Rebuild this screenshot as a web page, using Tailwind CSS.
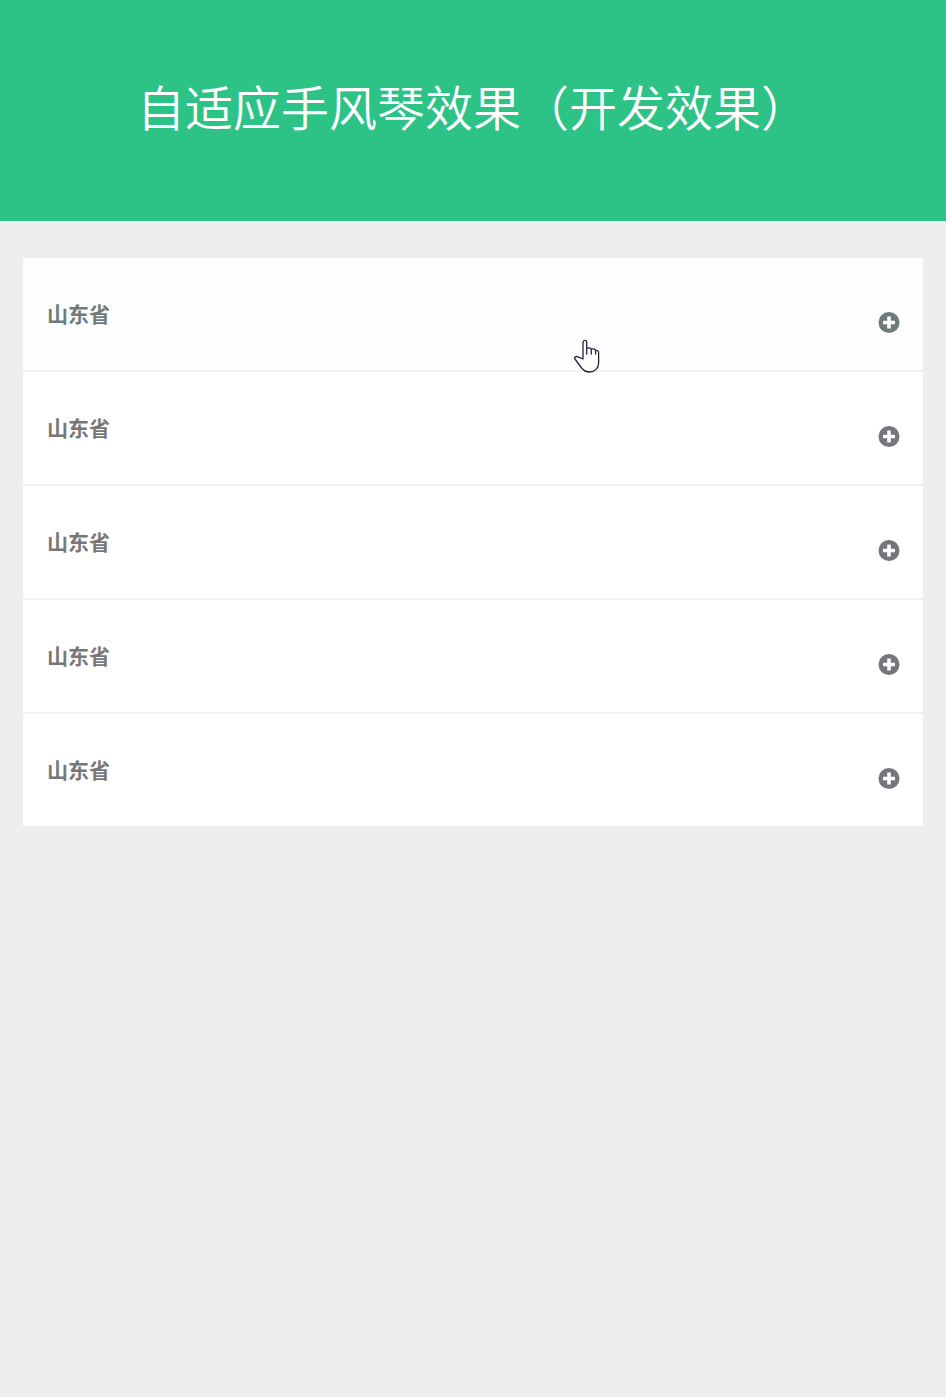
<!DOCTYPE html>
<html lang="zh-CN">
<head>
<meta charset="utf-8">
<title>自适应手风琴效果</title>
<script src="https://cdn.jsdelivr.net/npm/@tailwindcss/browser@4"></script>
</head>
<body class="bg-[#eeeeee] font-['Liberation_Sans','Noto_Sans_CJK_SC',sans-serif] min-h-[1397px]">
<header class="bg-[#2dc387] h-[221px] flex items-center justify-center">
  <h1 class="text-white text-[48px] font-[350] leading-none text-center -mt-[1px]">自适应手风琴效果（开发效果）</h1>
</header>
<main class="relative mx-[23px] mt-[37px] bg-white">
  <div class="h-[114px] bg-[#fcfefd] border-b-2 border-[#f1f1f1] flex justify-between pl-[24px] pr-[23px]">
    <span class="text-[#6e7b7b] text-[21px] font-bold leading-[30px] mt-[42px]">山东省</span>
    <svg class="w-[22px] h-[22px] mt-[53px]" viewBox="0 0 22 22"><circle cx="11" cy="11.500" r="10.500" fill="#6e7b7b"/><path d="M9.700 5.500h2.600a.5.5 0 0 1 .5.500v3.700h3.700a.5.5 0 0 1 .5.500v2.600a.5.5 0 0 1-.5.500h-3.700V17a.5.5 0 0 1-.5.500H9.700a.5.5 0 0 1-.5-.5v-3.700H5.500a.5.5 0 0 1-.5-.5v-2.600a.5.5 0 0 1 .5-.5h3.700V6a.5.5 0 0 1 .5-.5z" fill="#fff"/></svg>
  </div>
  <div class="h-[114px] border-b-2 border-[#f1f1f1] flex justify-between pl-[24px] pr-[23px]">
    <span class="text-[#777777] text-[21px] font-bold leading-[30px] mt-[42px]">山东省</span>
    <svg class="w-[22px] h-[22px] mt-[53px]" viewBox="0 0 22 22"><circle cx="11" cy="11.500" r="10.500" fill="#75767c"/><path d="M9.700 5.500h2.600a.5.5 0 0 1 .5.500v3.700h3.700a.5.5 0 0 1 .5.500v2.600a.5.5 0 0 1-.5.500h-3.700V17a.5.5 0 0 1-.5.500H9.700a.5.5 0 0 1-.5-.5v-3.700H5.500a.5.5 0 0 1-.5-.5v-2.600a.5.5 0 0 1 .5-.5h3.700V6a.5.5 0 0 1 .5-.5z" fill="#fff"/></svg>
  </div>
  <div class="h-[114px] border-b-2 border-[#f1f1f1] flex justify-between pl-[24px] pr-[23px]">
    <span class="text-[#777777] text-[21px] font-bold leading-[30px] mt-[42px]">山东省</span>
    <svg class="w-[22px] h-[22px] mt-[53px]" viewBox="0 0 22 22"><circle cx="11" cy="11.500" r="10.500" fill="#75767c"/><path d="M9.700 5.500h2.600a.5.5 0 0 1 .5.500v3.700h3.700a.5.5 0 0 1 .5.500v2.600a.5.5 0 0 1-.5.500h-3.700V17a.5.5 0 0 1-.5.500H9.700a.5.5 0 0 1-.5-.5v-3.700H5.500a.5.5 0 0 1-.5-.5v-2.600a.5.5 0 0 1 .5-.5h3.700V6a.5.5 0 0 1 .5-.5z" fill="#fff"/></svg>
  </div>
  <div class="h-[114px] border-b-2 border-[#f1f1f1] flex justify-between pl-[24px] pr-[23px]">
    <span class="text-[#777777] text-[21px] font-bold leading-[30px] mt-[42px]">山东省</span>
    <svg class="w-[22px] h-[22px] mt-[53px]" viewBox="0 0 22 22"><circle cx="11" cy="11.500" r="10.500" fill="#75767c"/><path d="M9.700 5.500h2.600a.5.5 0 0 1 .5.500v3.700h3.700a.5.5 0 0 1 .5.500v2.600a.5.5 0 0 1-.5.500h-3.700V17a.5.5 0 0 1-.5.500H9.700a.5.5 0 0 1-.5-.5v-3.700H5.500a.5.5 0 0 1-.5-.5v-2.600a.5.5 0 0 1 .5-.5h3.700V6a.5.5 0 0 1 .5-.5z" fill="#fff"/></svg>
  </div>
  <div class="h-[112px] flex justify-between pl-[24px] pr-[23px]">
    <span class="text-[#777777] text-[21px] font-bold leading-[30px] mt-[42px]">山东省</span>
    <svg class="w-[22px] h-[22px] mt-[53px]" viewBox="0 0 22 22"><circle cx="11" cy="11.500" r="10.500" fill="#75767c"/><path d="M9.700 5.500h2.600a.5.5 0 0 1 .5.500v3.700h3.700a.5.5 0 0 1 .5.500v2.600a.5.5 0 0 1-.5.500h-3.700V17a.5.5 0 0 1-.5.500H9.700a.5.5 0 0 1-.5-.5v-3.700H5.500a.5.5 0 0 1-.5-.5v-2.600a.5.5 0 0 1 .5-.5h3.700V6a.5.5 0 0 1 .5-.5z" fill="#fff"/></svg>
  </div>
  <svg class="absolute left-[551px] top-[81px] w-[26px] h-[34px]" viewBox="0 0 26 34" fill="#fff" stroke="#23233a" stroke-width="1.300" stroke-linejoin="round" stroke-linecap="round"><path d="M9 20V3.500c0-2.800 3.700-2.800 3.700 0V9.500c1.500-1 4-.8 4.600.8c1.500-.8 3.800-.5 4.300 1.200c1.500-.3 3 .3 3 2.300V24c0 5-3.500 9-9 9c-4 0-6-1.500-8-4L1 20c-1.200-1.500.8-3 2.300-2.300z"/><path d="M12.700 9.500V15M17.300 10.300V15M21.600 11.500V15" fill="none"/></svg>
</main>
</body>
</html>
